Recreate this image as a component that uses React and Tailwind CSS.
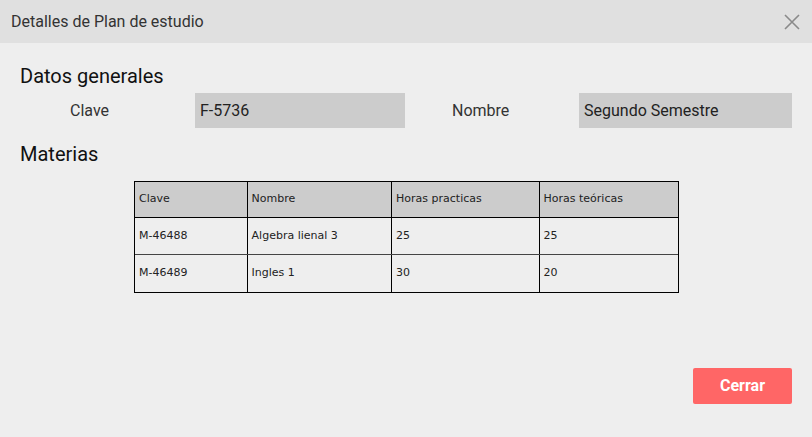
import React from "react";

const materias = [
  { clave: "M-46488", nombre: "Algebra lienal 3", practicas: "25", teoricas: "25" },
  { clave: "M-46489", nombre: "Ingles 1", practicas: "30", teoricas: "20" },
];

const cols = ["w-[113px]", "w-[145px]", "w-[148px]", "w-[139px]"];

export default function App() {
  return (
    <div className="w-[812px] h-[437px] bg-[#eeeeee] flex flex-col font-['Roboto',sans-serif]">
      {/* header */}
      <div className="h-[43px] bg-[#e0e0e0] flex items-center justify-between pl-[11px] pr-[12px]">
        <span className="text-[16px] text-[#333333]">Detalles de Plan de estudio</span>
        <svg width="16" height="16" viewBox="0 0 16 16" className="text-[#8a8a8a]">
          <path d="M1 1L15 15M15 1L1 15" stroke="currentColor" strokeWidth="1.6" />
        </svg>
      </div>

      <div className="flex-1 flex flex-col px-5">
        <h2 className="mt-[21px] text-[20px] leading-[24px] text-[#111111]">Datos generales</h2>

        <div className="mt-[5px] flex items-center h-[35px]">
          <span className="w-[175px] pl-[50px] text-[16px] text-[#333333]">Clave</span>
          <div className="w-[210px] h-full bg-[#cccccc] flex items-center px-[5px] text-[16px] text-[#222222]">
            F-5736
          </div>
          <span className="w-[174px] pl-[47px] text-[16px] text-[#333333]">Nombre</span>
          <div className="w-[213px] h-full bg-[#cccccc] flex items-center px-[5px] text-[16px] text-[#222222]">
            Segundo Semestre
          </div>
        </div>

        <h2 className="mt-[14px] text-[20px] leading-[24px] text-[#111111]">Materias</h2>

        <div className="mt-[15px] ml-[114px] w-[545px] border border-black font-['Comic_Sans_MS','DejaVu_Sans',sans-serif] text-[11px] text-[#222222]">
          <div className="flex h-[36px] bg-[#cccccc] border-b border-black">
            {["Clave", "Nombre", "Horas practicas", "Horas teóricas"].map((t, i) => (
              <div
                key={i}
                className={`${cols[i]} flex items-center px-[4px] ${i < 3 ? "border-r border-black" : ""}`}
              >
                {t}
              </div>
            ))}
          </div>
          {materias.map((m, idx) => (
            <div
              key={idx}
              className={`flex h-[37px] ${idx === 0 ? "border-b border-[#444444]" : ""}`}
            >
              {[m.clave, m.nombre, m.practicas, m.teoricas].map((v, i) => (
                <div
                  key={i}
                  className={`${cols[i]} flex items-center px-[4px] ${i < 3 ? "border-r border-black" : ""}`}
                >
                  {v}
                </div>
              ))}
            </div>
          ))}
        </div>

        <div className="mt-auto mb-[33px] flex justify-end">
          <button className="w-[99px] h-[36px] rounded-[2px] bg-[#ff6666] text-white font-bold text-[16px]">
            Cerrar
          </button>
        </div>
      </div>
    </div>
  );
}
